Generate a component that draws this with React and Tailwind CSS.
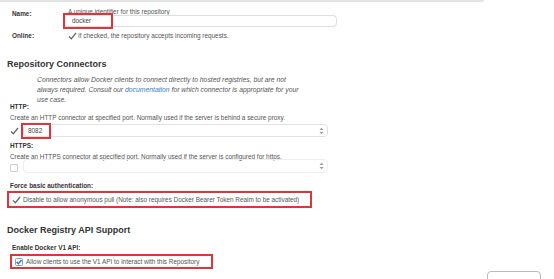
import React from 'react';

const Check = () => (
  <svg width="9" height="8" viewBox="0 0 9 8" className="shrink-0">
    <path d="M1 4.5 L3.3 6.8 L8 1" fill="none" stroke="#666" strokeWidth="1.3" />
  </svg>
);

const Spinner = () => (
  <svg width="5" height="8" viewBox="0 0 5 8" className="shrink-0">
    <path d="M0.5 3 L2.5 0.8 L4.5 3 Z M0.5 5 L2.5 7.2 L4.5 5 Z" fill="#999" />
  </svg>
);

const Label = ({ children, className = '' }) => (
  <div className={`text-[6.4px] font-bold text-[#333] leading-[8px] ${className}`}>{children}</div>
);

const Help = ({ children, className = '' }) => (
  <div className={`text-[6.4px] text-[#555] leading-[8px] whitespace-nowrap ${className}`}>{children}</div>
);

export default function App() {
  return (
    <div className="relative w-[554px] h-[279px] overflow-hidden bg-white font-['Liberation_Sans',sans-serif] text-[#333]">
      <div className="h-[2px] w-[484px] bg-[#e3e3e3] rounded-br" />

      {/* Name */}
      <div className="flex mt-[6px]">
        <Label className="w-[63px] pl-[12px] pt-[2px]">Name:</Label>
        <div className="flex flex-col">
          <Help className="pl-[5px]">A unique identifier for this repository</Help>
          <div className="relative mt-[-1px] w-[274px] h-[12px] border border-[#ddd] rounded-sm flex items-center pl-[8px] text-[6.4px] text-[#444]">
            docker
            <div className="absolute left-[-1px] top-[-3px] w-[50px] h-[16px] border-2 border-[#e0343c]" />
          </div>
        </div>
      </div>

      {/* Online */}
      <div className="flex items-center mt-[5px]">
        <Label className="w-[68px] pl-[12px]">Online:</Label>
        <Check />
        <Help className="pl-[1px]">If checked, the repository accepts incoming requests.</Help>
      </div>

      {/* Repository Connectors */}
      <div className="pl-[7px] mt-[18px] text-[9px] font-bold text-[#333] leading-[12px]">Repository Connectors</div>
      <div className="ml-[37px] mt-[5px] text-[6.8px] italic text-[#555] leading-[10px] whitespace-nowrap">
        <div>Connectors allow Docker clients to connect directly to hosted registries, but are not</div>
        <div>
          always required. Consult our <span className="text-[#3b7bbf]">documentation</span> for which connector is appropriate for your
        </div>
        <div>use case.</div>
      </div>

      <div className="pl-[10px] mt-[-2px]">
        <Label>HTTP:</Label>
        <Help className="mt-[3px]">Create an HTTP connector at specified port. Normally used if the server is behind a secure proxy.</Help>
        <div className="flex items-center mt-[2px]">
          <Check />
          <div className="relative ml-[4px] w-[305px] h-[13px] border border-[#e2e2e2] rounded-sm flex items-center justify-between pl-[4px] pr-[3px] text-[6.4px] text-[#444]">
            <span>8082</span>
            <Spinner />
            <div className="absolute left-[-3px] top-[-2px] w-[30px] h-[16px] border-2 border-[#e0343c]" />
          </div>
        </div>

        <Label className="mt-[5px]">HTTPS:</Label>
        <Help className="mt-[3px]">Create an HTTPS connector at specified port. Normally used if the server is configured for https.</Help>
        <div className="flex items-center mt-[-2px]">
          <div className="w-[8px] h-[8px] mt-[3px] border border-[#ccc] rounded-[1px] shrink-0" />
          <div className="ml-[5px] w-[305px] h-[14px] border border-[#eee] rounded-sm flex items-center justify-end pr-[3px]">
            <Spinner />
          </div>
        </div>

        <Label className="mt-[9px]">Force basic authentication:</Label>
      </div>
      <div className="ml-[7px] mt-[1px] w-[305px] h-[17px] border-2 border-[#e0343c] flex items-center pl-[3px] gap-[2px]">
        <Check />
        <Help>Disable to allow anonymous pull (Note: also requires Docker Bearer Token Realm to be activated)</Help>
      </div>

      {/* Docker Registry API Support */}
      <div className="pl-[7px] mt-[16px] text-[9px] font-bold text-[#333] leading-[12px]">Docker Registry API Support</div>
      <Label className="pl-[12px] mt-[8px]">Enable Docker V1 API:</Label>
      <div className="ml-[10px] mt-[2px] w-[203px] h-[15px] border-2 border-[#e0343c] flex items-center pl-[3px] gap-[3px]">
        <svg width="8" height="8" viewBox="0 0 8 8" className="shrink-0">
          <rect x="0.5" y="0.5" width="7" height="7" rx="1" fill="#fff" stroke="#7a9fd0" />
          <path d="M1.6 4 L3.3 5.8 L6.6 2" fill="none" stroke="#2f6fc4" strokeWidth="1.3" />
        </svg>
        <Help>Allow clients to use the V1 API to interact with this Repository</Help>
      </div>

      <div className="absolute left-[487px] top-[271px] w-[54px] h-[12px] border border-[#bbb] rounded-sm bg-white" />
    </div>
  );
}
